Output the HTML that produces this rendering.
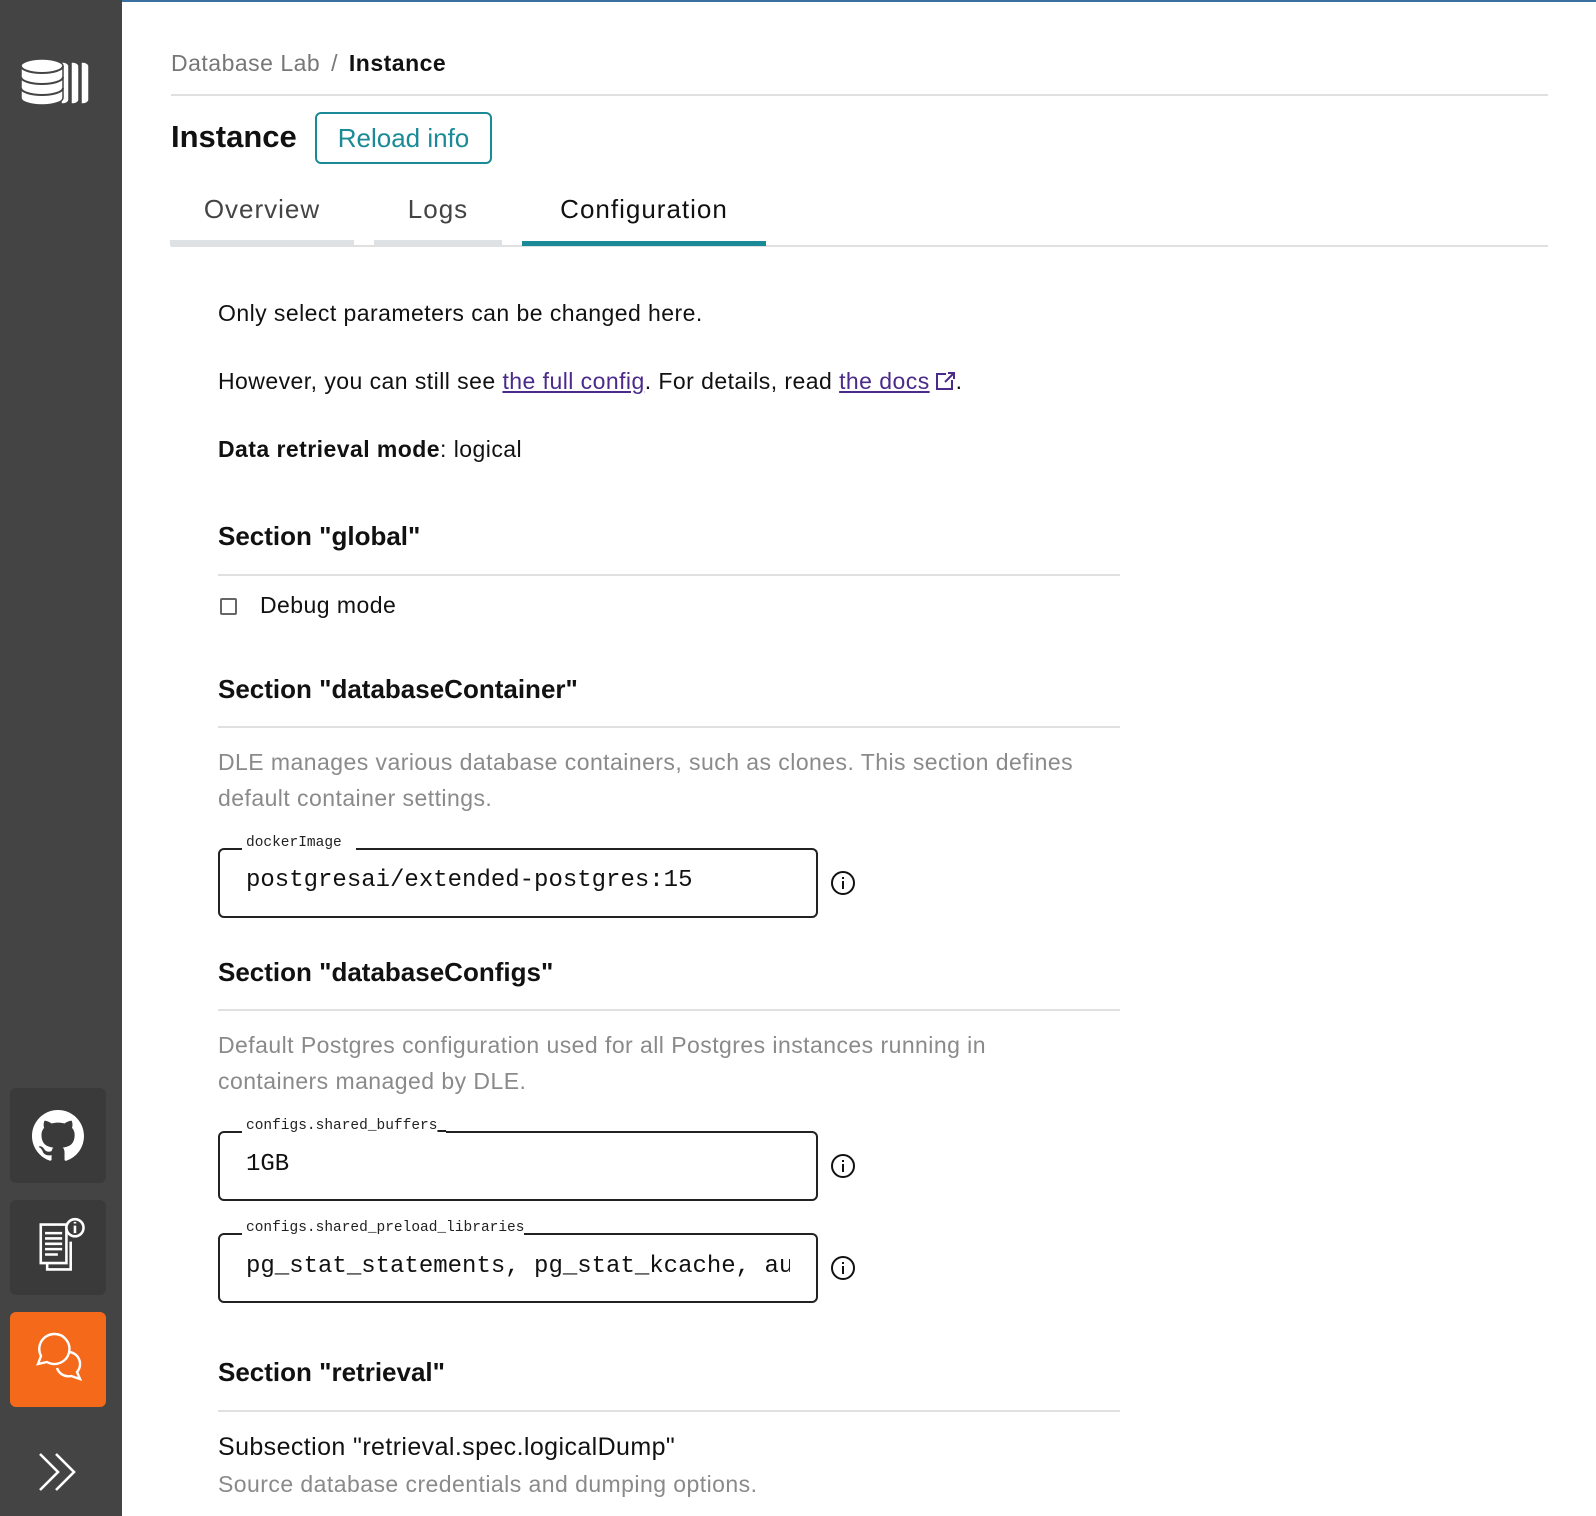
<!DOCTYPE html>
<html><head><meta charset="utf-8"><style>
*{box-sizing:border-box;margin:0;padding:0}
body{width:1596px;height:1516px;overflow:hidden;background:#fff;font-family:"Liberation Sans",sans-serif;color:#111;position:relative}
.a{position:absolute;white-space:nowrap}
.side{position:absolute;left:0;top:0;width:122px;height:1516px;background:#444}
.topbar{position:absolute;left:0;top:0;width:1596px;height:2px;background:#3a6fa0}
.hr{position:absolute;height:2px;background:#e0e0e0}
.t22{font-size:23px;letter-spacing:0.45px}
.sec{font-size:26px;font-weight:bold}
.gray{color:#8a8a8a}
.box{position:absolute;left:218px;width:600px;height:70px;border:2px solid #222;border-radius:6px}
.lbl{position:absolute;font-family:"Liberation Mono",monospace;font-size:14.5px;background:#fff;padding:0 4px;color:#222;white-space:nowrap}
.val{position:absolute;left:246px;font-family:"Liberation Mono",monospace;font-size:24px;color:#111;white-space:nowrap;overflow:hidden}
.sbtn{position:absolute;left:10px;width:96px;height:95px;border-radius:6px;background:#3a3a3a}
a{color:#4b2a8a;text-decoration:underline}
</style></head><body>
<div class="topbar"></div>
<div class="side">
 <svg class="a" style="left:20px;top:56px" width="80" height="50" viewBox="0 0 80 50" fill="#fff" stroke="#444" stroke-width="1.5">
  <path d="M63 6c3 0 6 2 6 4v34c0 2-3 4-6 4h-2V6z"/>
  <path d="M53 6c3 0 6 2 6 4v34c0 2-3 4-6 4h-2V6z"/>
  <path d="M43 6c3 0 6 2 6 4v34c0 2-3 4-6 4h-2V6z"/>
  <path d="M1 10c0-4 10-7 21-7s21 3 21 7v32c0 4-10 7-21 7S1 46 1 42z"/>
  <path d="M1 10c0 4 10 7 21 7s21-3 21-7M1 21c0 4 10 7 21 7s21-3 21-7M1 32c0 4 10 7 21 7s21-3 21-7" fill="none" stroke-width="2"/>
 </svg>
 <div class="sbtn" style="top:1088px"><svg class="a" style="left:22px;top:22px" width="52" height="52" viewBox="0 0 16 16" fill="#fff"><path d="M8 0C3.58 0 0 3.58 0 8c0 3.54 2.29 6.53 5.47 7.59.4.07.55-.17.55-.38v-1.34c-2.23.48-2.7-1.07-2.7-1.07-.36-.92-.89-1.17-.89-1.17-.73-.5.06-.49.06-.49.8.06 1.23.83 1.23.83.71 1.22 1.87.87 2.33.66.07-.52.28-.87.51-1.07-1.78-.2-3.64-.89-3.64-3.95 0-.87.31-1.59.82-2.15-.08-.2-.36-1.02.08-2.12 0 0 .67-.21 2.2.82.64-.18 1.32-.27 2-.27.68 0 1.36.09 2 .27 1.53-1.04 2.2-.82 2.2-.82.44 1.1.16 1.92.08 2.12.51.56.82 1.27.82 2.15 0 3.07-1.87 3.75-3.65 3.95.29.25.54.73.54 1.48v2.2c0 .21.15.46.55.38A8.013 8.013 0 0016 8c0-4.42-3.58-8-8-8z"/></svg></div>
 <div class="sbtn" style="top:1200px"><svg class="a" style="left:20px;top:16px" width="60" height="62" viewBox="0 0 56 58" fill="none" stroke="#fff" stroke-width="2.4"><path d="M10 8h24v36H10z"/><path d="M14 16h16M14 21h16M14 26h16M14 31h16M14 36h12"/><path d="M38 24v26H16v-6"/><circle cx="42" cy="11" r="8" fill="#3a3a3a"/><path d="M42 9v7M42 5.5v1.5"/></svg></div>
 <div class="sbtn" style="top:1312px;background:#f56a1a"><svg class="a" style="left:22px;top:18px" width="56" height="56" viewBox="0 0 56 56" fill="none" stroke="#fff" stroke-width="2.4"><path d="M22 4a15 15 0 1 1-7 28l-9 2 3-8A15 15 0 0 1 22 4z"/><path d="M36 22a12 12 0 0 1 9 20l3 7-9-3a12 12 0 0 1-14-8"/></svg></div>
 <svg class="a" style="left:36px;top:1452px" width="44" height="40" viewBox="0 0 44 40" fill="none" stroke="#fff" stroke-width="2.6"><path d="M4 2l18 18-18 18M20 2l18 18-18 18"/></svg>
</div>

<div class="a" style="left:171px;top:50px;font-size:23px;letter-spacing:0.5px;color:#777">Database Lab <span style="margin:0 4px">/</span> <span style="color:#111;font-weight:600">Instance</span></div>
<div class="hr" style="left:171px;top:94px;width:1377px"></div>
<div class="a" style="left:171px;top:119px;font-size:31px;font-weight:bold">Instance</div>
<div class="a" style="left:315px;top:112px;width:177px;height:52px;border:2px solid #1a8a96;border-radius:6px;color:#1a8a96;font-size:26px;text-align:center;line-height:48px">Reload info</div>

<div class="a" style="left:170px;top:194px;width:184px;text-align:center;font-size:26px;color:#444;letter-spacing:1px">Overview</div>
<div class="a" style="left:374px;top:194px;width:128px;text-align:center;font-size:26px;color:#444;letter-spacing:1px">Logs</div>
<div class="a" style="left:522px;top:194px;width:244px;text-align:center;font-size:26px;color:#111;letter-spacing:1px">Configuration</div>
<div class="hr" style="left:171px;top:245px;width:1377px"></div>
<div class="a" style="left:170px;top:240px;width:184px;height:6px;background:#dfe2e4"></div>
<div class="a" style="left:374px;top:240px;width:128px;height:6px;background:#dfe2e4"></div>
<div class="a" style="left:522px;top:241px;width:244px;height:5px;background:#1a8a96"></div>

<div class="a t22" style="left:218px;top:300px">Only select parameters can be changed here.</div>
<div class="a t22" style="left:218px;top:368px">However, you can still see <a>the full config</a>. For details, read <a>the docs</a><svg width="22" height="20" viewBox="0 0 22 20" fill="none" stroke="#4b2a8a" stroke-width="2" style="margin-left:4px;vertical-align:-2px"><path d="M12 3H3v15h15V9M14 2h6v6M20 2l-9 9"/></svg>.</div>
<div class="a t22" style="left:218px;top:436px"><b>Data retrieval mode</b>: logical</div>

<div class="a sec" style="left:218px;top:521px">Section "global"</div>
<div class="hr" style="left:218px;top:574px;width:902px"></div>
<div class="a" style="left:220px;top:598px;width:17px;height:17px;border:2px solid #666;border-radius:2px"></div>
<div class="a t22" style="left:260px;top:592px">Debug mode</div>

<div class="a sec" style="left:218px;top:674px">Section "databaseContainer"</div>
<div class="hr" style="left:218px;top:726px;width:902px"></div>
<div class="a t22 gray" style="left:218px;top:744px;line-height:36px;white-space:normal;width:900px">DLE manages various database containers, such as clones. This section defines default container settings.</div>
<div class="box" style="top:848px"></div>
<div class="lbl" style="left:242px;top:835px;padding:0 14px 0 4px">dockerImage</div>
<div class="val" style="top:867px">postgresai/extended-postgres:15</div>
<svg class="a" style="left:830px;top:870px" width="26" height="26" viewBox="0 0 26 26" fill="none" stroke="#111" stroke-width="2"><circle cx="13" cy="13" r="11"/><path d="M13 11v8M13 7v2"/></svg>

<div class="a sec" style="left:218px;top:957px">Section "databaseConfigs"</div>
<div class="hr" style="left:218px;top:1009px;width:902px"></div>
<div class="a t22 gray" style="left:218px;top:1027px;line-height:36px;white-space:normal;width:800px">Default Postgres configuration used for all Postgres instances running in containers managed by DLE.</div>
<div class="box" style="top:1131px"></div>
<div class="lbl" style="left:242px;top:1118px;padding:0 0 0 4px">configs.shared_buffers<span style="text-decoration:underline;text-decoration-thickness:2px">&nbsp;</span></div>
<div class="val" style="top:1151px">1GB</div>
<svg class="a" style="left:830px;top:1153px" width="26" height="26" viewBox="0 0 26 26" fill="none" stroke="#111" stroke-width="2"><circle cx="13" cy="13" r="11"/><path d="M13 11v8M13 7v2"/></svg>
<div class="box" style="top:1233px"></div>
<div class="lbl" style="left:242px;top:1220px;padding:0 0 0 4px">configs.shared_preload_libraries</div>
<div class="val" style="top:1253px;width:544px">pg_stat_statements, pg_stat_kcache, auto_explain</div>
<svg class="a" style="left:830px;top:1255px" width="26" height="26" viewBox="0 0 26 26" fill="none" stroke="#111" stroke-width="2"><circle cx="13" cy="13" r="11"/><path d="M13 11v8M13 7v2"/></svg>

<div class="a sec" style="left:218px;top:1357px">Section "retrieval"</div>
<div class="hr" style="left:218px;top:1410px;width:902px"></div>
<div class="a" style="left:218px;top:1433px;font-size:25px;letter-spacing:0.4px">Subsection "retrieval.spec.logicalDump"</div>
<div class="a t22 gray" style="left:218px;top:1471px">Source database credentials and dumping options.</div>
</body></html>
